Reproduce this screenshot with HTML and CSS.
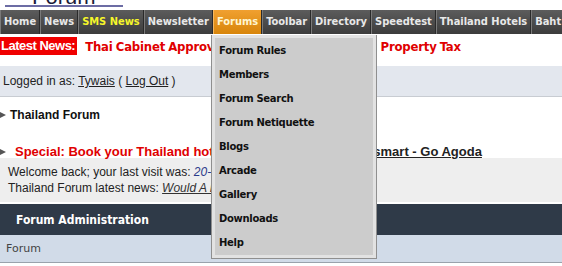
FILE: index.html
```html
<!DOCTYPE html>
<html lang="en">

<head>
    <meta charset="UTF-8">
    <title>Thailand Forum</title>
    <link rel="stylesheet" href="styles.css">
</head>

<body>
    <div class="logo-strip">
        <a class="logo" href="#">Forum</a>
    </div>

    <ul class="navbar">
        <li><a href="#">Home</a></li>
        <li><a href="#">News</a></li>
        <li class="sms"><a href="#">SMS News</a></li>
        <li><a href="#">Newsletter</a></li>
        <li class="active"><a href="#">Forums</a></li>
        <li><a href="#">Toolbar</a></li>
        <li><a href="#">Directory</a></li>
        <li><a href="#">Speedtest</a></li>
        <li><a href="#">Thailand Hotels</a></li>
        <li><a href="#">Baht</a></li>
    </ul>

    <div class="ticker">
        <span class="ticker-label">Latest News:</span>
        <span class="ticker-text">Thai Cabinet Approves New Land and Building Property Tax</span>
    </div>

    <div class="login-bar">
        Logged in as: <a href="#">Tywais</a> ( <a href="#">Log Out</a> )
    </div>

    <div class="crumb">Thailand Forum</div>

    <div class="special">
        <span class="special-red">Special: Book your Thailand hotels at lowest rates</span>
        <a href="#">- Book smart - Go Agoda</a>
    </div>

    <div class="welcome">
        <div>Welcome back; your last visit was: <em class="date">20-06-2008 at 09:14</em></div>
        <div>Thailand Forum latest news: <a href="#">Would A Bribe Work For An Overstay</a></div>
    </div>

    <div class="admin-head">Forum Administration</div>
    <div class="admin-row">Forum</div>

    <!-- open Forums menu -->
    <ul class="dropdown">
        <li><a href="#">Forum Rules</a></li>
        <li><a href="#">Members</a></li>
        <li><a href="#">Forum Search</a></li>
        <li><a href="#">Forum Netiquette</a></li>
        <li><a href="#">Blogs</a></li>
        <li><a href="#">Arcade</a></li>
        <li><a href="#">Gallery</a></li>
        <li><a href="#">Downloads</a></li>
        <li><a href="#">Help</a></li>
    </ul>
</body>

</html>
```

FILE: styles.css
```css
body {
    margin: 0;
    font-family: 'Liberation Sans', Arial, sans-serif;
    background-color: #fff;
    overflow: hidden;
}

a {
    color: inherit;
}

.logo-strip {
    height: 10px;
    overflow: hidden;
}

.logo {
    display: block;
    width: 118px;
    margin: -12px 0 0 5px;
    padding-left: 27px;
    box-sizing: border-box;
    font-size: 22px;
    line-height: 17px;
    color: #1c1c3a;
    text-decoration: none;
    border-bottom: 2px solid #6c6ca4;
}

.navbar {
    display: flex;
    list-style: none;
    margin: 0;
    padding: 0;
    height: 24px;
    background: #3a3a3a;
    white-space: nowrap;
}

.navbar li {
    border-left: 1px solid #7a7a7a;
    border-right: 1px solid #2a2a2a;
    background: linear-gradient(#5c5c5c, #3c3c3c);
}

.navbar a {
    display: block;
    padding: 0 3px 0 3px;
    line-height: 24px;
    font-family: 'DejaVu Sans Condensed', 'DejaVu Sans', Verdana, sans-serif;
    font-size: 11px;
    font-weight: bold;
    color: #e8e8e8;
    text-decoration: none;
}

.navbar .sms a {
    color: #f6f62a;
}

.navbar .active {
    background: linear-gradient(#f0a030, #d8850a);
    border-left-color: #f5b860;
}

.navbar .active a {
    color: #fff6d0;
}

.ticker {
    display: flex;
    align-items: center;
    gap: 8px;
    height: 22px;
    margin-top: 1px;
    white-space: nowrap;
}

.ticker-label {
    background-color: #f00000;
    color: #fff;
    font-weight: bold;
    font-size: 13px;
    letter-spacing: -0.5px;
    line-height: 18px;
    padding: 0 2px 0 1px;
}

.ticker-text {
    color: #e00000;
    font-family: 'DejaVu Sans Condensed', 'DejaVu Sans', Tahoma, sans-serif;
    font-weight: bold;
    font-size: 13px;
    letter-spacing: -0.2px;
    word-spacing: -0.7px;
}

.login-bar {
    margin-top: 9px;
    height: 30px;
    line-height: 30px;
    padding-left: 3px;
    font-size: 12px;
    color: #222;
    background-color: #e3e7ee;
    border-bottom: 1px solid #c8ccd2;
}

.crumb {
    margin-top: 7px;
    height: 22px;
    line-height: 22px;
    padding-left: 10px;
    font-size: 12px;
    font-weight: bold;
    color: #111;
    position: relative;
}

.special {
    margin-top: 17px;
    height: 15px;
    line-height: 18px;
    padding-left: 15px;
    font-size: 13px;
    font-weight: bold;
    white-space: nowrap;
    position: relative;
}

.crumb::before,
.special::before {
    content: "";
    position: absolute;
    left: 0;
    top: 8px;
    border-left: 6px solid #555;
    border-top: 3px solid transparent;
    border-bottom: 3px solid transparent;
}

.special::before {
    top: 6px;
}

.special-red {
    color: #e00000;
}

.special a {
    color: #222;
}

.welcome {
    background-color: #eeeeee;
    padding: 6px 8px 6px;
    font-size: 12px;
    line-height: 16px;
    color: #222;
    white-space: nowrap;
}

.welcome .date {
    color: #2a3a8a;
}

.welcome a {
    font-style: italic;
    color: #333;
}

.admin-head {
    margin-top: 2px;
    height: 31px;
    line-height: 32px;
    padding-left: 16px;
    font-family: 'DejaVu Sans Condensed', 'DejaVu Sans', Tahoma, sans-serif;
    font-size: 12px;
    font-weight: bold;
    color: #fff;
    background-color: #2f3a48;
}

.admin-row {
    height: 27px;
    line-height: 27px;
    padding-left: 6px;
    font-family: 'DejaVu Sans', Tahoma, sans-serif;
    font-size: 11px;
    color: #444;
    background-color: #d1dbe8;
    border-bottom: 1px solid #9aa2ac;
}

.dropdown {
    position: absolute;
    left: 211px;
    top: 35px;
    width: 158px;
    list-style: none;
    margin: 0;
    padding: 4px 3px 3px;
    background-color: #cccccc;
    border: 1px solid #8f8f8f;
    border-top: none;
    box-shadow: inset 0 0 0 3px #e2e2e2;
}

.dropdown li {
    height: 24px;
}

.dropdown a {
    display: block;
    padding-left: 4px;
    line-height: 24px;
    font-family: 'DejaVu Sans', Tahoma, sans-serif;
    font-size: 10px;
    font-weight: bold;
    letter-spacing: -0.3px;
    color: #111;
    text-decoration: none;
}
```
